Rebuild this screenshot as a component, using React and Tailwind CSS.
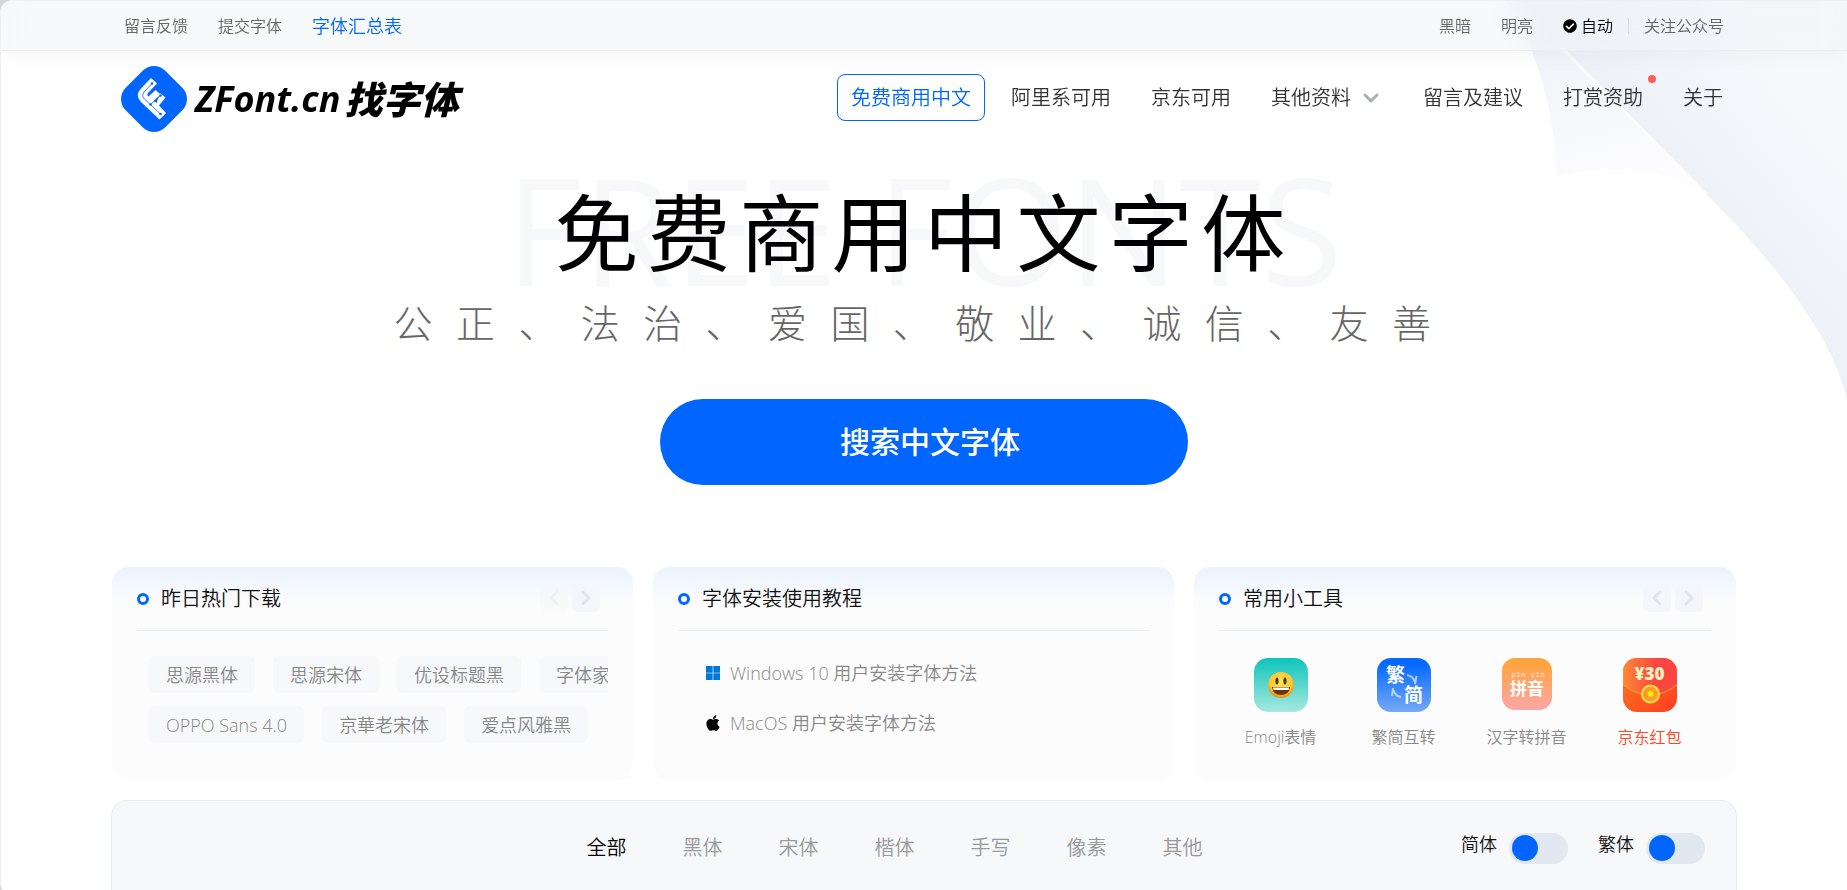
import { useState } from 'react';
import { ChevronDown, ChevronLeft, ChevronRight } from 'lucide-react';
import { FaApple, FaCheckCircle } from 'react-icons/fa';

const navItems = [
  { label: '免费商用中文', active: true },
  { label: '阿里系可用' },
  { label: '京东可用' },
  { label: '其他资料', dropdown: true },
  { label: '留言及建议' },
  { label: '打赏资助', dot: true },
  { label: '关于' },
];

const hotFonts = [
  ['思源黑体', '思源宋体', '优设标题黑', '字体家造字'],
  ['OPPO Sans 4.0', '京華老宋体', '爱点风雅黑'],
];

const categories = ['全部', '黑体', '宋体', '楷体', '手写', '像素', '其他'];

function Logo() {
  return (
    <a href="#" className="flex items-center text-black">
      <svg viewBox="0 0 66 66" className="h-[66px] w-[66px]" aria-hidden="true">
        <rect x="5" y="5" width="56" height="56" rx="16" fill="#0066ff" transform="rotate(45 33 33)" />
        <path
          d="M30 12 L36 17.500 L27 27 Q25.500 29 27.500 30.500 L34.500 24 L39.500 28.500 L32.500 35 L35.500 37 L39 27 L44.500 31.500 L38 39.500 L45 47 L38.500 53.500 L19.500 35.500 Q14 29 19.500 23 Z"
          fill="#fff"
        />
        <path
          d="M31 17.500 L23 26 Q20 30 24 33.500 L39.500 48 M39.500 29.500 L29.500 38.500"
          fill="none"
          stroke="#0066ff"
          strokeWidth="0.8"
        />
        <circle cx="31" cy="17.500" r="1.300" fill="#0066ff" />
        <circle cx="39.500" cy="29.500" r="1.300" fill="#0066ff" />
        <circle cx="29.500" cy="38.500" r="1.300" fill="#0066ff" />
        <circle cx="39.500" cy="48" r="1.300" fill="#0066ff" />
      </svg>
      <span className="ml-2 flex items-center gap-1 whitespace-nowrap text-4xl font-bold italic">
        <span>ZFont.cn</span>
        <span className="text-[38px] font-black">找字体</span>
      </span>
    </a>
  );
}

function Sweep() {
  return (
    <svg
      viewBox="0 0 340 400"
      className="pointer-events-none absolute right-0 top-0 h-[400px] w-[340px]"
      aria-hidden="true"
    >
      <defs>
        <linearGradient id="sweepMain" gradientUnits="userSpaceOnUse" x1="140" y1="150" x2="270" y2="40">
          <stop offset="0" stopColor="#edf1f7" />
          <stop offset="0.5" stopColor="#f2f5fa" />
          <stop offset="1" stopColor="#f8f9fc" />
        </linearGradient>
        <linearGradient id="sweepSide" gradientUnits="userSpaceOnUse" x1="60" y1="30" x2="100" y2="190">
          <stop offset="0" stopColor="#eff2f8" />
          <stop offset="1" stopColor="#fdfdfe" />
        </linearGradient>
      </defs>
      <path d="M0 0 Q48 80 49 176 Q130 154 199 193 L60 0 Z" fill="url(#sweepSide)" />
      <path d="M12 0 L59 51 L199 193 Q322 315 340 400 L340 0 Z" fill="url(#sweepMain)" />
      <path d="M55 47 L199 193" stroke="#fff" strokeOpacity="0.700" strokeWidth="3" />
    </svg>
  );
}

function Card({ title, arrows, children }) {
  return (
    <section className="min-w-0 rounded-2xl bg-[#fcfcfc] bg-[linear-gradient(#ebf3ff,#fcfcfc_36px)] px-[25px]">
      <div className="flex h-16 items-center border-b border-[#e6edfb]">
        <span className="h-3 w-3 rounded-full border-[3px] border-[#0066ff] bg-white" />
        <h2 className="ml-3 text-xl text-[#111]">{title}</h2>
        {arrows && (
          <div className="ml-auto mr-2 flex gap-1 pb-[2px]">
            <button
              aria-label="上一页"
              className={`flex h-7 w-7 items-center justify-center rounded-md bg-[#f5f6f9] text-[#dfe3eb] ${
                arrows === 'first' ? 'opacity-40' : ''
              }`}
            >
              <ChevronLeft size={24} strokeWidth={3} />
            </button>
            <button
              aria-label="下一页"
              className="flex h-7 w-7 items-center justify-center rounded-md bg-[#f5f6f9] text-[#dfe3eb]"
            >
              <ChevronRight size={24} strokeWidth={3} />
            </button>
          </div>
        )}
      </div>
      {children}
    </section>
  );
}

function EmojiIcon() {
  return (
    <svg viewBox="0 0 54 54" className="h-[54px] w-[54px]" aria-hidden="true">
      <defs>
        <linearGradient id="emojiBg" x1="0" y1="0" x2="0" y2="1">
          <stop offset="0" stopColor="#0dc5bb" />
          <stop offset="1" stopColor="#a8e8df" />
        </linearGradient>
        <radialGradient id="face" cx="0.5" cy="0.4" r="0.6">
          <stop offset="0" stopColor="#ffe55a" />
          <stop offset="0.700" stopColor="#fdc72e" />
          <stop offset="1" stopColor="#e58a12" />
        </radialGradient>
      </defs>
      <rect width="54" height="54" rx="14" fill="url(#emojiBg)" />
      <circle cx="27" cy="27" r="13" fill="url(#face)" />
      <ellipse cx="23" cy="23" rx="1.600" ry="3.600" fill="#5b3512" />
      <ellipse cx="31" cy="23" rx="1.600" ry="3.600" fill="#5b3512" />
      <path d="M18 29 H36 Q35 37 27 37 Q19 37 18 29 Z" fill="#6b3310" />
      <path d="M19 29.500 H35 L34.500 32 H19.500 Z" fill="#fff" />
    </svg>
  );
}

function ConvertIcon() {
  return (
    <svg viewBox="0 0 54 54" className="h-[54px] w-[54px]" aria-hidden="true">
      <defs>
        <linearGradient id="convertBg" x1="0" y1="0" x2="0" y2="1">
          <stop offset="0.100" stopColor="#0368ff" />
          <stop offset="1" stopColor="#76aaf5" />
        </linearGradient>
      </defs>
      <rect width="54" height="54" rx="14" fill="url(#convertBg)" />
      <text x="9" y="24" fontSize="19" fontWeight="700" fill="#fff">繁</text>
      <text x="27" y="44" fontSize="19" fontWeight="700" fill="#fff">简</text>
      <path d="M30 17 Q36 18 38 24 M38 26 L39.500 18" fill="none" stroke="#fff" strokeOpacity="0.600" strokeWidth="2" />
      <path d="M24 39 Q18 38 16.500 32 M16 30 L15 38" fill="none" stroke="#fff" strokeOpacity="0.600" strokeWidth="2" />
    </svg>
  );
}

function PinyinIcon() {
  return (
    <svg viewBox="0 0 50 52" className="mb-[2px] h-[52px] w-[50px]" aria-hidden="true">
      <defs>
        <linearGradient id="pinyinBg" x1="0" y1="0" x2="0" y2="1">
          <stop offset="0.100" stopColor="#ffa53f" />
          <stop offset="1" stopColor="#fba6a8" />
        </linearGradient>
      </defs>
      <rect width="50" height="52" rx="13" fill="url(#pinyinBg)" />
      <text x="26" y="19" fontSize="8" textAnchor="middle" className="font-mono" fill="#fff" fillOpacity="0.700">pīn yīn</text>
      <text x="25" y="37" fontSize="17" fontWeight="700" textAnchor="middle" fill="#fff">拼音</text>
    </svg>
  );
}

function RedPacketIcon() {
  return (
    <svg viewBox="0 0 54 54" className="h-[54px] w-[54px]" aria-hidden="true">
      <defs>
        <linearGradient id="packetBg" x1="0" y1="0" x2="1" y2="1">
          <stop offset="0" stopColor="#ff7a22" />
          <stop offset="1" stopColor="#ff3d20" />
        </linearGradient>
        <linearGradient id="packetFlap" x1="0" y1="0" x2="1" y2="0">
          <stop offset="0" stopColor="#ff8a35" />
          <stop offset="0.600" stopColor="#fb4640" />
        </linearGradient>
        <clipPath id="packetClip">
          <rect width="54" height="54" rx="14" />
        </clipPath>
      </defs>
      <g clipPath="url(#packetClip)">
        <rect width="54" height="54" fill="url(#packetBg)" />
        <path d="M-1 -1 H55 V26 Q27 48 -1 26 Z" fill="url(#packetFlap)" stroke="#ffa52b" />
      </g>
      <circle cx="27.500" cy="36" r="8.500" fill="#ff9a2e" stroke="#ffe043" strokeWidth="2" />
      <circle cx="27.500" cy="36" r="3" fill="#ffe800" />
      <text x="26.500" y="22" fontSize="17" fontWeight="800" textAnchor="middle" fill="#fff3c4">¥30</text>
    </svg>
  );
}

const tools = [
  { label: 'Emoji表情', icon: EmojiIcon },
  { label: '繁简互转', icon: ConvertIcon },
  { label: '汉字转拼音', icon: PinyinIcon },
  { label: '京东红包', icon: RedPacketIcon, hot: true },
];

function Toggle({ label }) {
  const [on, setOn] = useState(false);

  return (
    <label className="flex cursor-pointer items-center gap-3 text-lg text-[#111]">
      <span className="pb-2">{label}</span>
      <input type="checkbox" className="peer sr-only" checked={on} onChange={() => setOn(!on)} />
      <span className="flex h-[31px] w-[59px] items-center rounded-full bg-[#e2e8ef] px-[3px] peer-checked:justify-end">
        <span className="h-[26px] w-[26px] rounded-full bg-[#0066ff]" />
      </span>
    </label>
  );
}

export default function App() {
  const [category, setCategory] = useState('全部');

  return (
    <div className="min-h-screen bg-[#d3d5d8] font-['Open_Sans','Noto_Sans_CJK_SC',sans-serif] font-[350]">
      <div className="relative flex min-h-screen flex-col overflow-hidden rounded-l-xl border-l border-t border-[#eeeff1] bg-white">
        <Sweep />

        {/* Top bar */}
        <div className="relative border-b border-[#eceef0] bg-[#eef2f6]/45 shadow-[0_8px_20px_rgba(0,0,0,0.03)] backdrop-blur-md">
          <div className="mx-auto flex h-[49px] max-w-[1624px] items-center justify-between px-3 text-base text-[#666]">
            <div className="flex items-center gap-[30px]">
              <a href="#">留言反馈</a>
              <a href="#">提交字体</a>
              <a href="#" className="text-lg text-[#0066ff]">字体汇总表</a>
            </div>
            <div className="flex items-center">
              <button>黑暗</button>
              <button className="ml-[30px]">明亮</button>
              <button className="ml-[30px] flex items-center gap-1 text-black">
                <FaCheckCircle className="h-[14px] w-[14px]" />
                自动
              </button>
              <span className="mx-[15px] h-4 w-px bg-[#ddd]" />
              <a href="#">关注公众号</a>
            </div>
          </div>
        </div>

        {/* Header */}
        <header className="relative mx-auto flex h-24 w-full max-w-[1626px] items-center justify-between pl-[10px]">
          <Logo />
          <nav className="flex items-center gap-3 pb-[3px] text-xl text-[#333]">
            {navItems.map((item) => (
              <a
                key={item.label}
                href="#"
                className={`relative flex h-[47px] items-center whitespace-nowrap rounded-lg border px-[13px] ${
                  item.active ? 'border-[#0066ff] text-[#0066ff]' : 'border-transparent'
                }`}
              >
                {item.label}
                {item.dropdown && <ChevronDown size={24} strokeWidth={3} className="ml-2 text-[#aaadb1]" />}
                {item.dot && <span className="absolute right-0 top-0 h-2 w-2 rounded-full bg-[#ff5c5c]" />}
              </a>
            ))}
          </nav>
        </header>

        {/* Hero */}
        <section className="relative flex flex-col items-center pt-11 text-center">
          <div className="relative">
            <span
              aria-hidden="true"
              className="absolute left-1/2 top-[38px] -translate-x-1/2 -translate-y-1/2 whitespace-nowrap text-[148px] font-normal leading-none text-[#f6f8fa]"
            >
              FREE FONTS
            </span>
            <h1 className="relative whitespace-nowrap text-[84px] font-normal leading-none tracking-widest text-black">
              免费商用中文字体
            </h1>
          </div>
          <p className="mt-5 whitespace-nowrap text-[39px] font-light leading-[56px] tracking-[0.6em] text-[#666]">
            公正、法治、爱国、敬业、诚信、友善
          </p>
          <button className="mt-12 h-[86px] w-[528px] rounded-full bg-[#0066ff] pl-3 text-3xl font-medium text-white">
            搜索中文字体
          </button>
        </section>

        {/* Cards */}
        <div className="relative mx-auto mt-[82px] grid h-[213px] w-full max-w-[1624px] grid-cols-[25fr_25fr_26fr] gap-5">
          <Card title="昨日热门下载" arrows="first">
            <div className="flex flex-col gap-[13px] overflow-hidden pl-3 pt-[25px] text-lg text-[#888]">
              {hotFonts.map((row) => (
                <div key={row[0]} className="flex gap-[18px]">
                  {row.map((name) => (
                    <a key={name} href="#" className="flex h-[37px] shrink-0 items-center rounded-md bg-[#f7f8fa] px-[17px]">
                      {name}
                    </a>
                  ))}
                </div>
              ))}
            </div>
          </Card>

          <Card title="字体安装使用教程">
            <ul className="pl-7 pt-[17px] text-lg text-[#888]">
              <li>
                <a href="#" className="flex h-[50px] items-center gap-[10px]">
                  <svg viewBox="0 0 13 13" className="h-[14px] w-[14px]" fill="#0078d7" aria-hidden="true">
                    <path d="M0 0h6.200v6.200H0zM6.800 0H13v6.200H6.800zM0 6.800h6.200V13H0zM6.800 6.800H13V13H6.800z" />
                  </svg>
                  Windows 10 用户安装字体方法
                </a>
              </li>
              <li>
                <a href="#" className="flex h-[50px] items-center gap-[10px]">
                  <FaApple className="h-[18px] w-[14px] text-black" />
                  MacOS 用户安装字体方法
                </a>
              </li>
            </ul>
          </Card>

          <Card title="常用小工具" arrows="both">
            <div className="grid grid-cols-4 pt-[27px] text-base text-[#888]">
              {tools.map((tool) => (
                <a
                  key={tool.label}
                  href="#"
                  className={`flex flex-col items-center whitespace-nowrap ${tool.hot ? 'text-[#ff4422]' : ''}`}
                >
                  <tool.icon />
                  <span className="mt-[13px]">{tool.label}</span>
                </a>
              ))}
            </div>
          </Card>
        </div>

        {/* Filter panel */}
        <div className="relative mx-auto mt-5 w-full max-w-[1626px] flex-1 rounded-t-2xl border border-b-0 border-[#e6edf8] bg-[#f7f8fa]">
          <div className="grid h-[94px] grid-cols-[1fr_auto_1fr] items-center pr-[31px]">
            <div className="col-start-2 flex gap-14 pr-7 text-xl">
              {categories.map((name) => (
                <button
                  key={name}
                  onClick={() => setCategory(name)}
                  className={category === name ? 'text-black' : 'text-[#999]'}
                >
                  {name}
                </button>
              ))}
            </div>
            <div className="flex justify-end gap-[30px]">
              <Toggle label="简体" />
              <Toggle label="繁体" />
            </div>
          </div>
        </div>
      </div>
    </div>
  );
}
